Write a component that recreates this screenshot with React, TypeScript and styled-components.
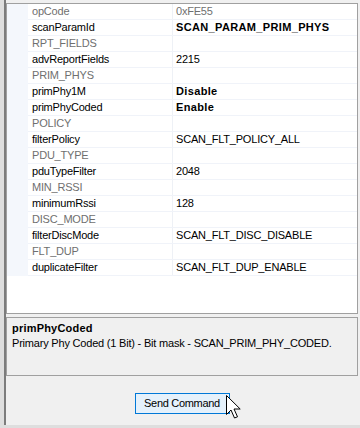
import React from "react";
import styled, { createGlobalStyle } from "styled-components";

const GlobalStyle = createGlobalStyle`
  html, body {
    margin: 0;
    padding: 0;
    background: #f0f0f0;
  }
  body {
    font-family: "Liberation Sans", Arial, sans-serif;
    font-size: 11px;
    letter-spacing: -0.2px;
    color: #000;
  }
  * { box-sizing: border-box; }
`;

type Kind = "normal" | "readonly" | "category";

interface Prop {
  name: string;
  value?: string;
  kind?: Kind;
  bold?: boolean;
}

const rows: Prop[] = [
  { name: "opCode", value: "0xFE55", kind: "readonly" },
  { name: "scanParamId", value: "SCAN_PARAM_PRIM_PHYS", bold: true },
  { name: "RPT_FIELDS", kind: "category" },
  { name: "advReportFields", value: "2215" },
  { name: "PRIM_PHYS", kind: "category" },
  { name: "primPhy1M", value: "Disable", bold: true },
  { name: "primPhyCoded", value: "Enable", bold: true },
  { name: "POLICY", kind: "category" },
  { name: "filterPolicy", value: "SCAN_FLT_POLICY_ALL" },
  { name: "PDU_TYPE", kind: "category" },
  { name: "pduTypeFilter", value: "2048" },
  { name: "MIN_RSSI", kind: "category" },
  { name: "minimumRssi", value: "128" },
  { name: "DISC_MODE", kind: "category" },
  { name: "filterDiscMode", value: "SCAN_FLT_DISC_DISABLE" },
  { name: "FLT_DUP", kind: "category" },
  { name: "duplicateFilter", value: "SCAN_FLT_DUP_ENABLE" },
];

const Outer = styled.div`
  width: 360px;
  height: 428px;
  background: #dedede;
  padding-left: 4px;
  padding-bottom: 3px;
  overflow: hidden;
`;

const Inner = styled.div`
  height: 425px;
  border-left: 2px solid #7c7c7c;
  background: #f0f0f0;
  display: flex;
  flex-direction: column;
  padding-top: 3px;
`;

const Column = styled.div`
  width: 352px;
  display: flex;
  flex-direction: column;
`;

const GridPanel = styled.div`
  height: 311px;
  border: 1px solid #a0a0a0;
  background: #ffffff;
`;

const Row = styled.div`
  display: grid;
  grid-template-columns: 21px 144px 1px 1fr;
  height: 16px;
  border-bottom: 1px solid #f0f3f9;
`;

const Gutter = styled.div`
  background: #f4f7fc;
  margin-bottom: -1px;
`;

const NameCell = styled.div<{ $muted: boolean }>`
  padding-left: 4px;
  line-height: 15px;
  white-space: nowrap;
  overflow: hidden;
  color: ${(p) => (p.$muted ? "#6f6f6f" : "#000")};
`;

const Divider = styled.div`
  background: #eef1f6;
`;

const ValueCell = styled.div<{ $muted: boolean; $bold: boolean }>`
  padding-left: 3px;
  line-height: 15px;
  white-space: nowrap;
  overflow: hidden;
  color: ${(p) => (p.$muted ? "#6f6f6f" : "#000")};
  font-weight: ${(p) => (p.$bold ? 700 : 400)};
  letter-spacing: ${(p) => (p.$bold ? "0.35px" : "-0.2px")};
`;

const DescPanel = styled.div`
  margin-top: 3px;
  height: 59px;
  border: 1px solid #a0a0a0;
  background: #f0f0f0;
  padding: 3px 5px 0 5px;
`;

const DescTitle = styled.div`
  font-weight: 700;
  letter-spacing: 0.2px;
  line-height: 15px;
`;

const DescText = styled.div`
  line-height: 15px;
`;

const ButtonBar = styled.div`
  display: flex;
  justify-content: center;
  padding-top: 17px;
`;

const ButtonWrap = styled.div`
  position: relative;
`;

const SendButton = styled.button`
  width: 95px;
  height: 21px;
  border: 1px solid #0078d7;
  background: #e5f1fb;
  font-family: "Liberation Sans", Arial, sans-serif;
  font-size: 11px;
  letter-spacing: -0.3px;
  color: #000;
  padding: 0;
  margin: 0;
  line-height: 19px;
`;

const Cursor = styled.svg`
  position: absolute;
  left: 91px;
  top: 2px;
  width: 16px;
  height: 26px;
  pointer-events: none;
`;

export default function App() {
  return (
    <>
      <GlobalStyle />
      <Outer>
        <Inner>
          <Column>
            <GridPanel>
              {rows.map((r) => {
                const muted = r.kind === "readonly" || r.kind === "category";
                return (
                  <Row key={r.name}>
                    <Gutter />
                    <NameCell $muted={muted}>{r.name}</NameCell>
                    <Divider />
                    <ValueCell $muted={muted} $bold={!!r.bold}>
                      {r.value ?? ""}
                    </ValueCell>
                  </Row>
                );
              })}
            </GridPanel>
            <DescPanel>
              <DescTitle>primPhyCoded</DescTitle>
              <DescText>Primary Phy Coded (1 Bit) - Bit mask - SCAN_PRIM_PHY_CODED.</DescText>
            </DescPanel>
            <ButtonBar>
              <ButtonWrap>
                <SendButton>Send Command</SendButton>
                <Cursor viewBox="0 0 16 26">
                  <path
                    d="M0.5 0.5 L0.5 19.5 L5 15 L8.5 23 L11.5 21.8 L8 14 L14.2 14 Z"
                    fill="#ffffff"
                    stroke="#000000"
                    strokeWidth="1"
                    strokeLinejoin="miter"
                  />
                </Cursor>
              </ButtonWrap>
            </ButtonBar>
          </Column>
        </Inner>
      </Outer>
    </>
  );
}
